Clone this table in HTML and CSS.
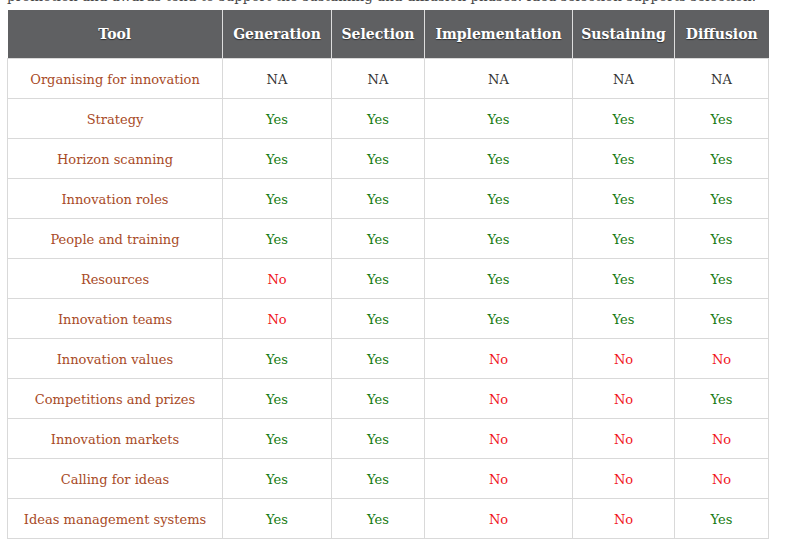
FILE: index.html
```html
<!DOCTYPE html>
<html>
<head>
<meta charset="utf-8">
<link rel="stylesheet" href="styles.css">
</head>
<body>
<div class="page">
<p class="intro">promotion and awards tend to support the sustaining and diffusion phases. Idea selection supports selection.</p>
<table class="tools">
<colgroup>
<col class="c-tool"><col class="c-gen"><col class="c-sel"><col class="c-imp"><col class="c-sus"><col class="c-dif">
</colgroup>
<thead>
<tr><th>Tool</th><th>Generation</th><th>Selection</th><th>Implementation</th><th>Sustaining</th><th>Diffusion</th></tr>
</thead>
<tbody>
<tr><td class="name">Organising for innovation</td><td class="na">NA</td><td class="na">NA</td><td class="na">NA</td><td class="na">NA</td><td class="na">NA</td></tr>
<tr><td class="name">Strategy</td><td class="yes">Yes</td><td class="yes">Yes</td><td class="yes">Yes</td><td class="yes">Yes</td><td class="yes">Yes</td></tr>
<tr><td class="name">Horizon scanning</td><td class="yes">Yes</td><td class="yes">Yes</td><td class="yes">Yes</td><td class="yes">Yes</td><td class="yes">Yes</td></tr>
<tr><td class="name">Innovation roles</td><td class="yes">Yes</td><td class="yes">Yes</td><td class="yes">Yes</td><td class="yes">Yes</td><td class="yes">Yes</td></tr>
<tr><td class="name">People and training</td><td class="yes">Yes</td><td class="yes">Yes</td><td class="yes">Yes</td><td class="yes">Yes</td><td class="yes">Yes</td></tr>
<tr><td class="name">Resources</td><td class="no">No</td><td class="yes">Yes</td><td class="yes">Yes</td><td class="yes">Yes</td><td class="yes">Yes</td></tr>
<tr><td class="name">Innovation teams</td><td class="no">No</td><td class="yes">Yes</td><td class="yes">Yes</td><td class="yes">Yes</td><td class="yes">Yes</td></tr>
<tr><td class="name">Innovation values</td><td class="yes">Yes</td><td class="yes">Yes</td><td class="no">No</td><td class="no">No</td><td class="no">No</td></tr>
<tr><td class="name">Competitions and prizes</td><td class="yes">Yes</td><td class="yes">Yes</td><td class="no">No</td><td class="no">No</td><td class="yes">Yes</td></tr>
<tr><td class="name">Innovation markets</td><td class="yes">Yes</td><td class="yes">Yes</td><td class="no">No</td><td class="no">No</td><td class="no">No</td></tr>
<tr><td class="name">Calling for ideas</td><td class="yes">Yes</td><td class="yes">Yes</td><td class="no">No</td><td class="no">No</td><td class="no">No</td></tr>
<tr><td class="name">Ideas management systems</td><td class="yes">Yes</td><td class="yes">Yes</td><td class="no">No</td><td class="no">No</td><td class="yes">Yes</td></tr>
</tbody>
</table>
</div>
</body>
</html>
```

FILE: styles.css
```css
html, body {
  margin: 0;
  padding: 0;
  background: #fff;
  overflow: hidden;
}
.page {
  padding: 0 7px;
  font-family: "DejaVu Serif", "Liberation Serif", serif;
  color: #333;
}
.intro {
  margin: -14px 0 0 0;
  font-size: 13.5px;
  line-height: 20px;
  height: 20px;
  white-space: nowrap;
  color: #444;
  padding-bottom: 4px;
}
.tools {
  border-collapse: collapse;
  table-layout: fixed;
  width: 762px;
  font-size: 13px;
}
.c-tool { width: 215px; }
.c-gen { width: 109px; }
.c-sel { width: 93px; }
.c-imp { width: 148px; }
.c-sus { width: 102px; }
.c-dif { width: 94px; }
.tools th {
  background: #5f6062;
  color: #fff;
  font-weight: bold;
  font-size: 14px;
  height: 48px;
  padding: 0;
  text-align: center;
  border-left: 1px solid #ddd;
  text-shadow: 0 1px 1px rgba(0,0,0,0.5);
  white-space: nowrap;
}
.tools th:first-child { border-left: none; }
.tools td {
  height: 38px;
  padding: 1px 0 0 0;
  text-align: center;
  border: 1px solid #d9d9d9;
  white-space: nowrap;
}
.tools td.name { color: #a84a26; }
.tools td.na { color: #333; }
.tools td.yes { color: #157a10; }
.tools td.no { color: #f0151b; }
```
